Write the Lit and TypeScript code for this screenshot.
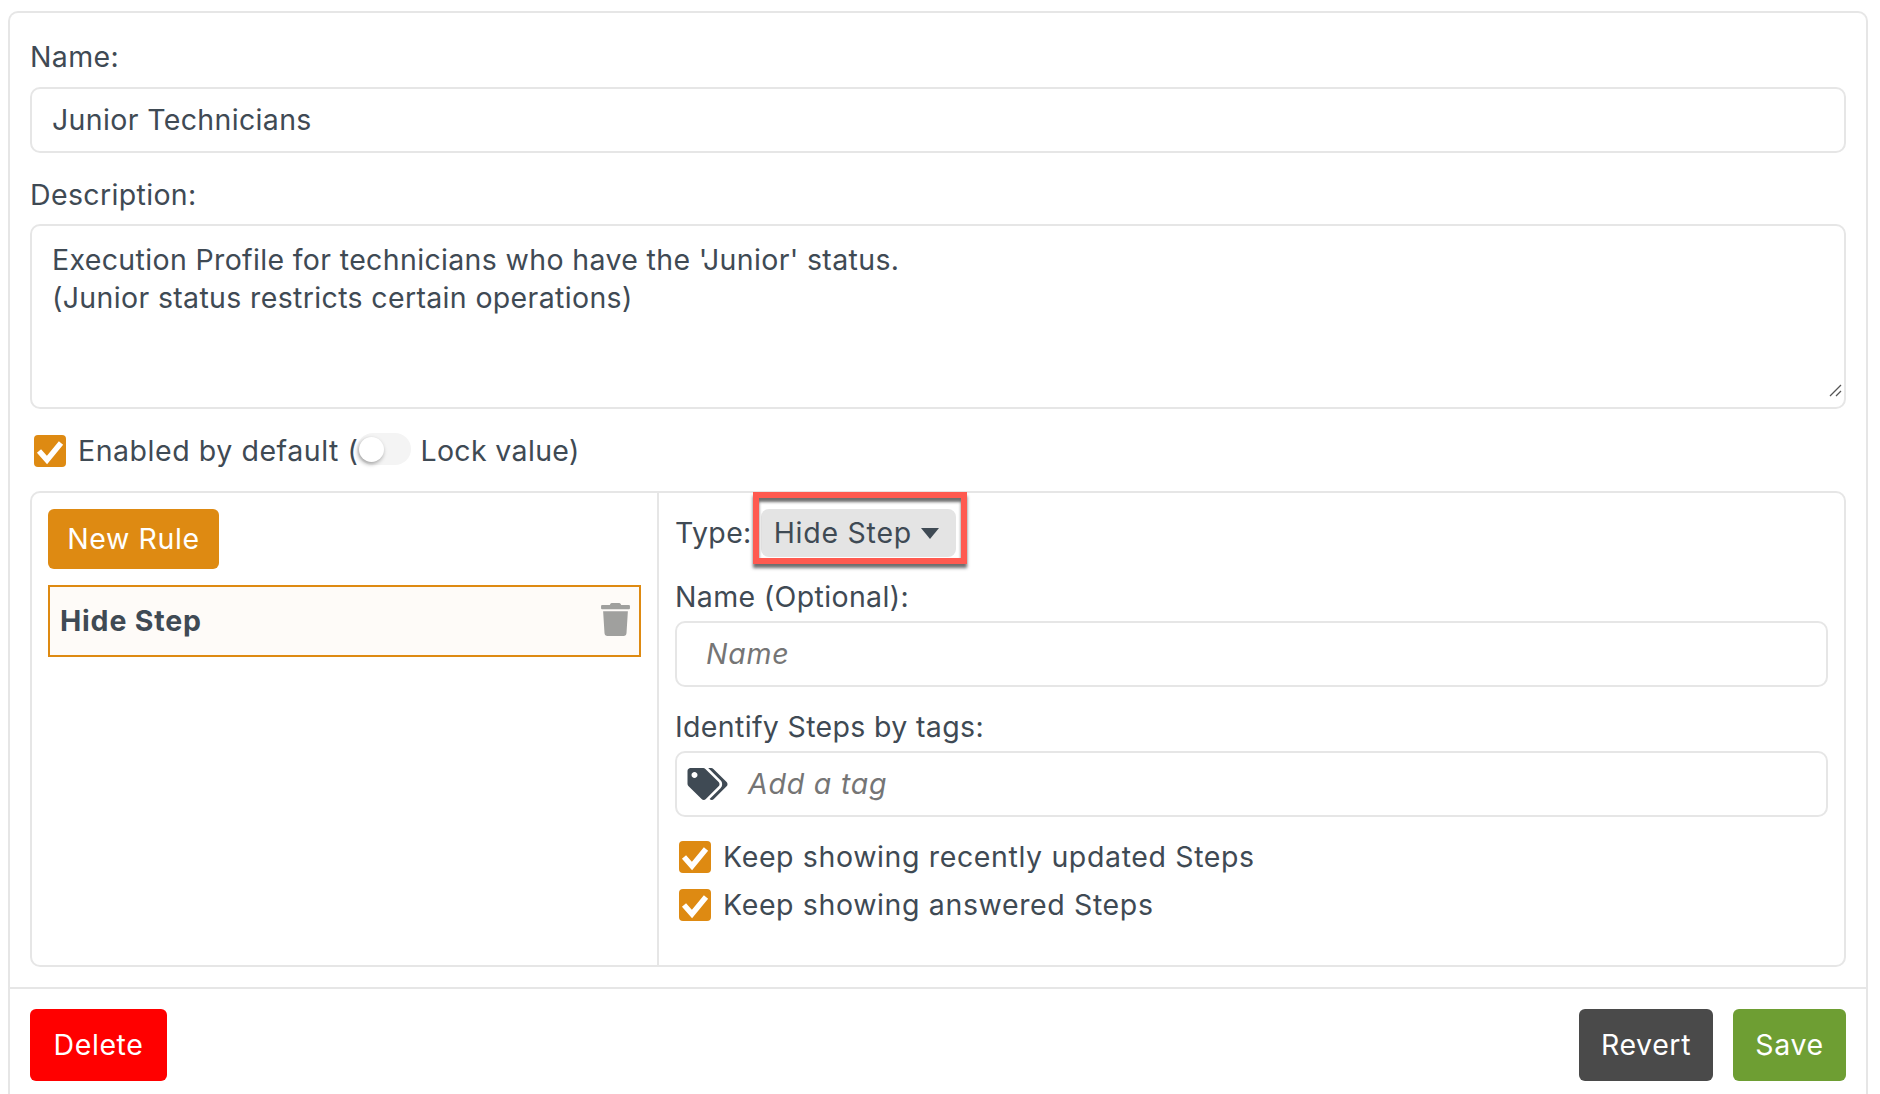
import { LitElement, html, css, svg } from "lit";
import { customElement } from "lit/decorators.js";

const check = html`<svg class="check" viewBox="0 0 32 32" aria-hidden="true"><path d="M5 16 L13 25 L27 8" fill="none" stroke="#fff" stroke-width="5.5"/></svg>`;
const tagsPath = svg`<path d="M497.941 225.941L286.059 14.059A48 48 0 0 0 252.118 0H48C21.49 0 0 21.49 0 48v204.118a48 48 0 0 0 14.059 33.941l211.882 211.882c18.744 18.745 49.136 18.746 67.882 0l204.118-204.118c18.745-18.745 18.745-49.137 0-67.882zM112 160c-26.51 0-48-21.49-48-48s21.49-48 48-48 48 21.49 48 48-21.49 48-48 48zm513.941 133.823L421.823 497.941c-18.745 18.745-49.137 18.745-67.882 0l-.36-.36L527.64 323.522c16.999-16.999 26.36-39.6 26.36-63.64s-9.362-46.641-26.36-63.64L331.397 0h48.721a48 48 0 0 1 33.941 14.059l211.882 211.882c18.745 18.745 18.745 49.137 0 67.882z"/>`;
const trashPath = svg`<path d="M432 32H312l-9.4-18.7A24 24 0 0 0 281.1 0H166.8a23.72 23.72 0 0 0-21.4 13.3L136 32H16A16 16 0 0 0 0 48v32a16 16 0 0 0 16 16h416a16 16 0 0 0 16-16V48a16 16 0 0 0-16-16zM53.2 467a48 48 0 0 0 47.9 45h245.8a48 48 0 0 0 47.9-45L416 128H32z"/>`;

@customElement("app-root")
export class AppRoot extends LitElement {
  static styles = css`
    :host {
      display: block;
      font-family: "Inter", "Liberation Sans", sans-serif;
      font-size: 28.5px;
      letter-spacing: 0.35px;
      line-height: 38px;
      color: #3f4a54;
      background: #fff;
      height: 1094px;
      overflow: hidden;
    }
    * { box-sizing: border-box; }
    .panel {
      margin: 11px 12px 0 8px;
      height: 1100px;
      border: 2px solid #e6e6e6;
      border-bottom: none;
      border-radius: 10px 10px 0 0;
      display: flex;
      flex-direction: column;
    }
    .form { padding: 24px 20px 0; display: flex; flex-direction: column; }
    .label { height: 38px; }
    .name-label { padding-top: 1px; }
    .field {
      height: 66px;
      border: 2px solid #e6e6e6;
      border-radius: 10px;
      display: flex;
      align-items: center;
      padding: 0 20px;
    }
    .name-field { margin: 12px 0 23px; }
    .area {
      position: relative;
      height: 185px;
      margin: 10px 0 23px;
      border: 2px solid #e6e6e6;
      border-radius: 10px;
      padding: 15px 20px;
      white-space: pre-line;
    }
    .grip { position: absolute; right: 2px; bottom: 10px; width: 15px; height: 15px; }
    .enabled { display: flex; align-items: center; height: 38px; padding-left: 4px; margin-bottom: 21px; }
    .box {
      width: 32px; height: 32px; border-radius: 4px; background: #de8a12;
      flex: none; display: block;
    }
    .check { display: block; width: 32px; height: 32px; }
    .enabled .txt { margin-left: 12px; letter-spacing: 0.55px; }
    .toggle {
      position: relative;
      width: 54px; height: 32px; border-radius: 16px; background: #f4f4f4;
      flex: none; margin: -4px 9px 0 -1px;
    }
    .knob {
      position: absolute; left: 2px; top: 4px; width: 25px; height: 25px; border-radius: 50%;
      background: #fff; box-shadow: -1px 2px 4px rgba(0,0,0,.35);
    }
    .rules {
      height: 476px;
      border: 2px solid #e6e6e6;
      border-radius: 10px;
      display: flex;
    }
    .left { width: 627px; flex: none; border-right: 2px solid #e6e6e6; padding: 16px 16px 0; }
    .btn {
      display: inline-flex; align-items: center; justify-content: center;
      height: 60px; border-radius: 6px; color: #fff; flex: none; letter-spacing: 0.6px;
    }
    .new { width: 171px; background: #de8a12; }
    .rule {
      height: 72px; margin-top: 16px; border: 2px solid #de8a12; background: #fefbf8;
      display: flex; align-items: center; justify-content: space-between;
      padding: 0 9px 0 10px; font-weight: 700; letter-spacing: 0.8px;
    }
    .trash { width: 29px; height: 33px; fill: #a0a09e; display: block; margin-top: -4px; }
    .right { flex: 1; padding: 0 16px 0 16px; display: flex; flex-direction: column; }
    .type { display: flex; align-items: center; height: 48px; margin-top: 16px; }
    .select {
      position: relative;
      margin-left: 9px;
      width: 195px; height: 48px; background: #e4e4e4; border-radius: 8px;
      display: flex; align-items: center; padding-left: 13px; letter-spacing: 0.75px;
    }
    .caret {
      width: 0; height: 0; margin-left: 9px; margin-top: 1px;
      border-left: 9px solid transparent; border-right: 9px solid transparent;
      border-top: 11px solid #3f4a54;
    }
    .callout {
      position: absolute; left: -8px; top: -17px; width: 214px; height: 72px;
      border: 6px solid #ff5a50;
      box-shadow: 0 4px 3px rgba(50,50,50,.7), inset 0 4px 3px rgba(50,50,50,.7);
      pointer-events: none;
    }
    .lab2 { height: 38px; margin-top: 21px; }
    .optional { margin-top: 20px; padding-top: 1px; }
    .right .field { margin-top: 5px; }
    .right .tag-field { margin-top: 6px; padding-left: 10px; }
    .ph { font-style: italic; color: #757575; letter-spacing: 0.8px; }
    .name-ph { padding-left: 9px; }
    .tags { width: 41px; height: 32px; fill: #3f4a54; flex: none; margin-right: 20px; }
    .opt { display: flex; align-items: center; height: 32px; padding-left: 4px; gap: 12px; letter-spacing: 0.62px; }
    .opt1 { margin-top: 24px; }
    .opt2 { margin-top: 16px; }
    .footer {
      margin-top: 20px;
      border-top: 2px solid #e6e6e6;
      padding: 20px 20px 0;
      display: flex; align-items: flex-start;
    }
    .btn.foot { height: 72px; }
    .del { width: 137px; background: #ff0000; }
    .rev { width: 134px; background: #4a4a4a; margin-left: auto; }
    .save { width: 113px; background: #6e9e33; margin-left: 20px; }
  `;

  render() {
    return html`
      <div class="panel">
        <div class="form">
          <div class="label name-label">Name:</div>
          <div class="field name-field">Junior Technicians</div>
          <div class="label">Description:</div>
          <div class="area">Execution Profile for technicians who have the 'Junior' status.
(Junior status restricts certain operations)<svg class="grip" viewBox="0 0 15 15" aria-hidden="true"><path d="M3 14 L14 3 M9 14 L14 9" stroke="#555" stroke-width="1.3" fill="none"/></svg></div>
          <div class="enabled">
            <span class="box">${check}</span>
            <span class="txt">Enabled by default (</span>
            <span class="toggle"><span class="knob"></span></span>
            <span>Lock value)</span>
          </div>
          <div class="rules">
            <div class="left">
              <div class="btn new">New Rule</div>
              <div class="rule">
                <span>Hide Step</span>
                <svg class="trash" viewBox="0 0 448 512" aria-hidden="true">${trashPath}</svg>
              </div>
            </div>
            <div class="right">
              <div class="type">
                <span>Type:</span>
                <div class="select">
                  <span>Hide Step</span><span class="caret"></span>
                  <div class="callout"></div>
                </div>
              </div>
              <div class="lab2">Name (Optional):</div>
              <div class="field"><span class="ph name-ph">Name</span></div>
              <div class="lab2 optional">Identify Steps by tags:</div>
              <div class="field tag-field">
                <svg class="tags" viewBox="0 0 640 512" aria-hidden="true">${tagsPath}</svg>
                <span class="ph">Add a tag</span>
              </div>
              <div class="opt opt1"><span class="box">${check}</span><span>Keep showing recently updated Steps</span></div>
              <div class="opt opt2"><span class="box">${check}</span><span>Keep showing answered Steps</span></div>
            </div>
          </div>
        </div>
        <div class="footer">
          <div class="btn foot del">Delete</div>
          <div class="btn foot rev">Revert</div>
          <div class="btn foot save">Save</div>
        </div>
      </div>
    `;
  }
}
